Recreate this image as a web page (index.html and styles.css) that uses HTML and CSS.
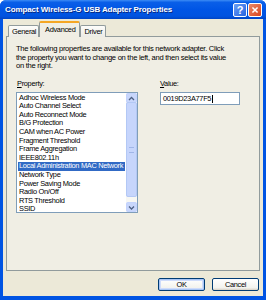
FILE: index.html
```html
<!DOCTYPE html>
<html lang="en">

<head>
	<meta charset="UTF-8">
	<title>Compact Wireless-G USB Adapter Properties</title>
	<link rel="stylesheet" href="styles.css">
</head>

<body>
	<div class="window">
		<div class="title-bar">
			<span class="title">Compact Wireless-G USB Adapter Properties</span>
			<div class="caption-buttons">
				<span class="cap-btn help">?</span>
				<span class="cap-btn close">
					<svg viewBox="0 0 14 14" width="14" height="14">
						<path d="M 4 4 L 10 10 M 10 4 L 4 10" stroke="#ffffff" stroke-width="1.8" fill="none" />
					</svg>
				</span>
			</div>
		</div>
		<div class="dialog">
			<div class="tabs">
				<span class="tab">General</span>
				<span class="tab active">Advanced</span>
				<span class="tab">Driver</span>
			</div>
			<div class="panel">
				<p class="intro">The following properties are available for this network adapter. Click<br>the property you want to change on the left, and then select its value<br>on the right.</p>
				<div class="fields">
					<div class="field">
						<label><u>P</u>roperty:</label>
						<div class="listbox">
							<ul class="items">
								<li>Adhoc Wireless Mode</li>
								<li>Auto Channel Select</li>
								<li>Auto Reconnect Mode</li>
								<li>B/G Protection</li>
								<li>CAM when AC Power</li>
								<li>Fragment Threshold</li>
								<li>Frame Aggregation</li>
								<li>IEEE802.11h</li>
								<li class="selected">Local Administration MAC Network</li>
								<li>Network Type</li>
								<li>Power Saving Mode</li>
								<li>Radio On/Off</li>
								<li>RTS Threshold</li>
								<li>SSID</li>
							</ul>
							<div class="scrollbar">
								<span class="arrow">
									<svg viewBox="0 0 9 9" width="9" height="9">
										<path d="M 2 6 L 4.5 3.5 L 7 6" stroke="#4d6185" stroke-width="1.3" fill="none" />
									</svg>
								</span>
								<span class="thumb"><span class="grip"></span></span>
								<span class="track-gap"></span>
								<span class="arrow">
									<svg viewBox="0 0 9 9" width="9" height="9">
										<path d="M 2 3.5 L 4.5 6 L 7 3.5" stroke="#4d6185" stroke-width="1.3" fill="none" />
									</svg>
								</span>
							</div>
						</div>
					</div>
					<div class="field value-field">
						<label><u>V</u>alue:</label>
						<div class="textbox">0019D23A77F5<span class="caret"></span></div>
					</div>
				</div>
			</div>
			<div class="actions">
				<button class="default">OK</button>
				<button>Cancel</button>
			</div>
		</div>
	</div>
</body>

</html>
```

FILE: styles.css
```css
:root {
	--frame: #0054e3;
	--face: #ece9d8;
	--panel: #f0eee4;
	--tab-border: #919b9c;
	--text: #000000;
	--select: #316ac5;
}

body {
	margin: 0;
	padding: 0;
	font-family: 'Liberation Sans', Arial, sans-serif;
	font-size: 7.4px;
	letter-spacing: -0.3px;
	color: var(--text);
	background: #ffffff;
}

.window {
	width: 266px;
	height: 300px;
	display: flex;
	flex-direction: column;
	background: var(--frame);
	border-radius: 6px 6px 0 0;
	overflow: hidden;
}

.title-bar {
	height: 19px;
	flex-shrink: 0;
	display: flex;
	align-items: center;
	padding: 0 4px 0 5px;
	background: linear-gradient(to bottom, #3d8cf5 0%, #0a5fe8 12%, #0055e5 50%, #0053e0 85%, #0044c4 100%);
}

.title {
	flex-grow: 1;
	color: #ffffff;
	font-weight: bold;
	font-size: 8px;
	letter-spacing: -0.1px;
	text-shadow: 1px 1px 0 #0a2a80;
	white-space: nowrap;
}

.caption-buttons {
	display: flex;
	gap: 1px;
	margin-top: 1px;
}

.cap-btn {
	width: 14px;
	height: 14px;
	box-sizing: border-box;
	border: 1px solid #ffffff;
	border-radius: 2px;
	display: flex;
	align-items: center;
	justify-content: center;
	color: #ffffff;
	font-weight: bold;
	font-size: 11px;
	letter-spacing: 0;
}

.cap-btn svg {
	display: block;
}

.help {
	background: linear-gradient(to bottom right, #6b9ff5, #2663e0);
}

.close {
	background: linear-gradient(to bottom right, #ea8a6a, #d8451f);
}

.dialog {
	flex-grow: 1;
	display: flex;
	flex-direction: column;
	margin: 0 3px 4px 3px;
	padding: 3px 3px 0 3px;
	background: var(--face);
}

.tabs {
	display: flex;
	align-items: flex-end;
	padding-left: 2px;
	height: 15px;
	position: relative;
	z-index: 1;
	margin-bottom: -1px;
}

.tab {
	height: 11px;
	line-height: 11px;
	padding: 0 3px;
	border: 1px solid var(--tab-border);
	border-bottom: none;
	border-radius: 2px 2px 0 0;
	background: linear-gradient(to bottom, #fdfdfb, #ecebe5);
	margin-right: -1px;
}

.tab:first-child {
	width: 23px;
}

.tab.active {
	height: 14px;
	line-height: 13px;
	padding: 0 4px 0 5px;
	border-top: 2px solid #f5a623;
	background: var(--panel);
	margin: 0 0 0 1px;
	position: relative;
	z-index: 2;
}

.panel {
	height: 235px;
	box-sizing: border-box;
	border: 1px solid var(--tab-border);
	background: var(--panel);
	padding: 8px 9px 0 9px;
}

.intro {
	margin: 0;
	font-size: 7.6px;
	letter-spacing: -0.28px;
	line-height: 8.7px;
	white-space: nowrap;
}

.fields {
	display: flex;
	margin-top: 9px;
}

.field {
	display: flex;
	flex-direction: column;
}

.field label {
	line-height: 8px;
	margin-bottom: 4px;
	padding-left: 1px;
}

.value-field {
	margin-left: 21px;
}

.listbox {
	width: 122px;
	height: 121px;
	box-sizing: border-box;
	border: 1px solid #7f9db9;
	background: #ffffff;
	display: flex;
}

.items {
	list-style: none;
	margin: 0;
	padding: 0.5px 1px 0 1px;
	flex-grow: 1;
}

.items li {
	line-height: 8.6px;
	height: 8.6px;
	padding-left: 1px;
	white-space: nowrap;
}

.items li.selected {
	background: var(--select);
	color: #ffffff;
}

.scrollbar {
	width: 11px;
	display: flex;
	flex-direction: column;
	background: #eef0f8;
}

.arrow {
	height: 10px;
	box-sizing: border-box;
	border: 1px solid #c3d3fd;
	border-radius: 2px;
	background: #c8d6fb;
	display: flex;
	align-items: center;
	justify-content: center;
}

.thumb {
	flex-grow: 1;
	margin-top: -1px;
	box-sizing: border-box;
	border: 1px solid #b3c8f5;
	border-radius: 2px;
	background: #c6d5fc;
	display: flex;
	align-items: center;
	justify-content: center;
}

.grip {
	width: 5px;
	height: 4px;
	border-top: 1px solid #9fb5e8;
	border-bottom: 1px solid #9fb5e8;
}

.track-gap {
	height: 5px;
	background: #f7f7f3;
}

.textbox {
	width: 80px;
	height: 13px;
	box-sizing: border-box;
	border: 1px solid #7f9db9;
	background: #ffffff;
	padding: 0 2px;
	line-height: 11px;
	margin-left: 1px;
	display: flex;
	align-items: center;
}

.caret {
	width: 1px;
	height: 8px;
	background: #000000;
	margin-left: 1px;
}

.actions {
	display: flex;
	justify-content: flex-end;
	gap: 7px;
	padding: 7px 1px 0 0;
}

button {
	width: 47px;
	height: 13px;
	padding: 0;
	font-family: inherit;
	font-size: 7.4px;
	letter-spacing: -0.3px;
	color: var(--text);
	border: 1px solid #003c74;
	border-radius: 2px;
	background: linear-gradient(to bottom, #ffffff, #f3f3ee 80%, #d6d0c5);
}

button.default {
	box-shadow: inset 0 0 0 1px #a8c5f5, inset 0 0 0 2px #cfdcfa;
}
```
